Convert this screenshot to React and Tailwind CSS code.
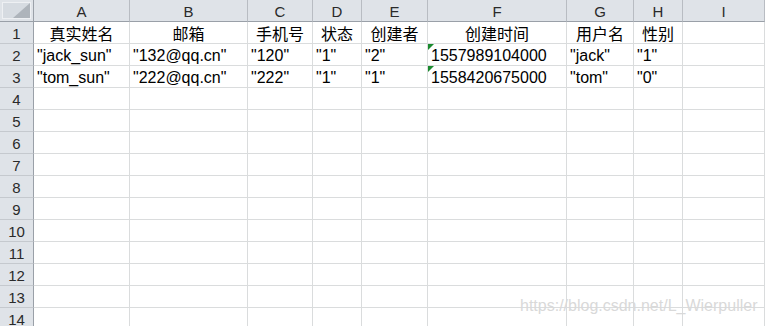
import React from "react";

const cols = ["A", "B", "C", "D", "E", "F", "G", "H", "I"];
const widths = [96, 118, 65, 49, 66, 139, 67, 49, 82];

const header = ["真实姓名", "邮箱", "手机号", "状态", "创建者", "创建时间", "用户名", "性别", ""];
const data = [
  ['"jack_sun"', '"132@qq.cn"', '"120"', '"1"', '"2"', "1557989104000", '"jack"', '"1"', ""],
  ['"tom_sun"', '"222@qq.cn"', '"222"', '"1"', '"1"', "1558420675000", '"tom"', '"0"', ""],
];

const latin = { fontFamily: '"Liberation Sans", Arial, sans-serif' };
const cjk = { fontFamily: '"Noto Sans CJK SC", "Liberation Sans", sans-serif' };

function RowHeader({ n }) {
  return (
    <div
      className="h-[22px] w-[34px] shrink-0 border-r border-b border-r-[#9aa0a8] border-b-[#c5c9ce] bg-[#dfe3e8] text-center text-[15px] leading-[22px] pt-[1px] text-[#2a2a2a]"
      style={latin}
    >
      {n}
    </div>
  );
}

export default function App() {
  const rows = [];
  for (let r = 1; r <= 14; r++) {
    rows.push(r);
  }
  return (
    <div className="relative h-[326px] w-[765px] overflow-hidden bg-white">
      <div className="flex h-[22px]">
        <div className="relative h-[22px] w-[34px] shrink-0 border-r border-b border-r-[#9aa0a8] border-b-[#9aa0a8] bg-[#dfe3e8] p-[2px]">
          <div className="relative h-full w-full border border-[#eef0f3] bg-[#d6dbe1]">
            <svg className="absolute bottom-0 right-0" width="17" height="15" viewBox="0 0 17 15">
              <polygon points="17,0 17,15 0,15" fill="#aeb4bb" />
            </svg>
          </div>
        </div>
        {cols.map((c, i) => (
          <div
            key={c}
            className="h-[22px] shrink-0 border-r border-b border-r-[#b8bcc2] border-b-[#9aa0a8] bg-[#dfe3e8] text-center text-[15px] leading-[22px] pt-[1px] text-[#2a2a2a]"
            style={{ ...latin, width: widths[i] }}
          >
            {c}
          </div>
        ))}
      </div>
      {rows.map((r) => (
        <div key={r} className="flex h-[22px]">
          <RowHeader n={r} />
          {cols.map((c, i) => {
            let content = "";
            let centered = false;
            let isCjk = false;
            let tri = false;
            if (r === 1) {
              content = header[i];
              centered = true;
              isCjk = true;
            } else if (r === 2 || r === 3) {
              content = data[r - 2][i];
              tri = i === 5;
            }
            return (
              <div
                key={c}
                className={
                  "relative flex h-[22px] shrink-0 whitespace-nowrap border-r border-b border-[#dadcdd] text-black " +
                  (centered
                    ? "items-center justify-center text-[16px] leading-[20px]"
                    : "items-start pl-[3px] pt-[2px] text-[16px] leading-[19px]")
                }
                style={{ ...(isCjk ? cjk : latin), width: widths[i] }}
              >
                {tri && (
                  <svg className="absolute left-0 top-0" width="6" height="6" viewBox="0 0 6 6">
                    <polygon points="0,0 6,0 0,6" fill="#1a8a2e" />
                  </svg>
                )}
                <span>{content}</span>
              </div>
            );
          })}
        </div>
      ))}
      <div
        className="pointer-events-none absolute left-[520px] top-[296px] whitespace-nowrap text-[16px] leading-[20px] text-[#d9d9d9]"
        style={latin}
      >
        https://blog.csdn.net/L_Wierpuller
      </div>
    </div>
  );
}
